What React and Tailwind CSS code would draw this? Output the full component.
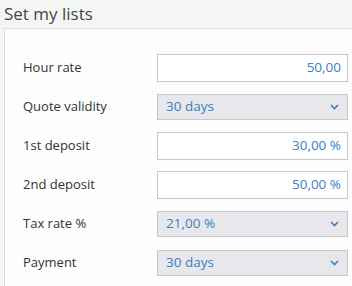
const rows = [
  { label: 'Hour rate', value: '50,00', type: 'input' },
  { label: 'Quote validity', value: '30 days', type: 'select' },
  { label: '1st deposit', value: '30,00 %', type: 'input' },
  { label: '2nd deposit', value: '50,00 %', type: 'input' },
  { label: 'Tax rate %', value: '21,00 %', type: 'select' },
  { label: 'Payment', value: '30 days', type: 'select' },
]

function Chevron() {
  return (
    <svg width="9" height="6" viewBox="0 0 9 6" className="text-[#3a7fc1]">
      <polyline points="1,1 4.5,4.5 8,1" fill="none" stroke="currentColor" strokeWidth="1.6" />
    </svg>
  )
}

export default function App() {
  return (
    <div
      className="w-[352px] h-[286px] overflow-hidden bg-[#f4f6f5] text-[#333]"
      style={{ fontFamily: '"Open Sans", "Noto Sans", sans-serif' }}
    >
      <div className="h-[28px] px-[4px] text-[17px] leading-[28px] text-[#444]">Set my lists</div>
      <div className="ml-[4px] h-[258px] border-l border-t border-[#dcdcdc] bg-[#fdfdfd] pt-[19px] pl-[18px]">
        {rows.map(r => (
          <div key={r.label} className="flex h-[39px] items-center">
            <div className="w-[134px] text-[13px] text-[#333]">{r.label}</div>
            {r.type === 'input' ? (
              <div className="flex h-[28px] w-[191px] items-center justify-end border border-[#c8c8c8] bg-white px-[6px] text-[13.5px] text-[#3a7fc1]">
                {r.value}
              </div>
            ) : (
              <div className="flex h-[26px] w-[191px] items-center justify-between border border-[#c8c8c8] bg-[#e8e8ec] pl-[8px] pr-[8px] text-[13.5px] text-[#3a7fc1]">
                <span>{r.value}</span>
                <Chevron />
              </div>
            )}
          </div>
        ))}
      </div>
    </div>
  )
}
